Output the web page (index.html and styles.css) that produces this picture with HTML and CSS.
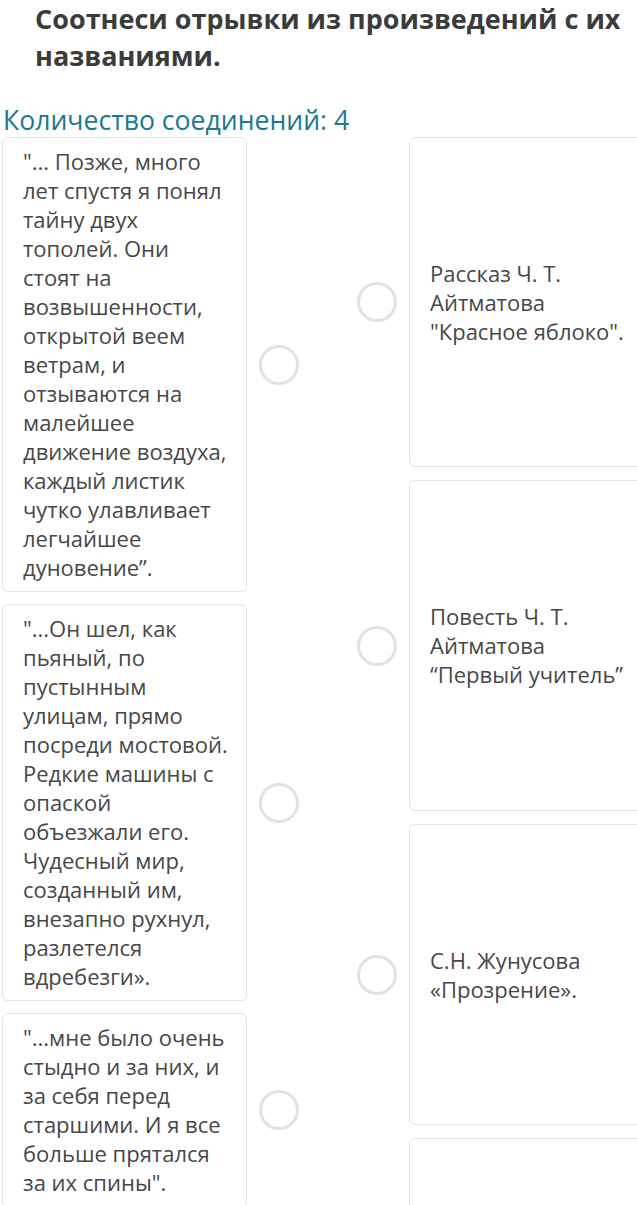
FILE: index.html
```html
<!DOCTYPE html>
<html lang="ru">
<head>
<meta charset="utf-8">
<link rel="stylesheet" href="styles.css">
</head>
<body>
<div class="page">
  <h1 class="title">Соотнеси отрывки из произведений с их названиями.</h1>
  <div class="count">Количество соединений: 4</div>
  <div class="board">
    <div class="col col-left">
      <div class="row">
        <div class="card card-left">"... Позже, много лет спустя я понял тайну двух тополей. Они стоят на возвышенности, открытой веем ветрам, и отзываются на малейшее движение воздуха, каждый листик чутко улавливает легчайшее дуновение”.</div>
        <span class="dot dot-left"></span>
      </div>
      <div class="row">
        <div class="card card-left">"...Он шел, как пьяный, по пустынным улицам, прямо посреди мостовой. Редкие машины с опаской объезжали его. Чудесный мир, созданный им, внезапно рухнул, разлетелся вдребезги».</div>
        <span class="dot dot-left"></span>
      </div>
      <div class="row">
        <div class="card card-left">"...мне было очень стыдно и за них, и за себя перед старшими. И я все больше прятался за их спины".</div>
        <span class="dot dot-left"></span>
      </div>
    </div>
    <div class="col col-right">
      <div class="row">
        <span class="dot dot-right"></span>
        <div class="card card-right h-a">Рассказ Ч. Т. Айтматова "Красное яблоко".</div>
      </div>
      <div class="row">
        <span class="dot dot-right"></span>
        <div class="card card-right h-b">Повесть Ч. Т. Айтматова “Первый учитель”</div>
      </div>
      <div class="row">
        <span class="dot dot-right"></span>
        <div class="card card-right h-c">С.Н. Жунусова «Прозрение».</div>
      </div>
      <div class="row">
        <span class="dot dot-right"></span>
        <div class="card card-right h-d"></div>
      </div>
    </div>
  </div>
</div>
</body>
</html>
```

FILE: styles.css
```css
html, body {
  margin: 0;
  padding: 0;
  background: #ffffff;
}
body {
  font-family: "Open Sans", "Noto Sans", sans-serif;
  overflow: hidden;
  width: 637px;
  height: 1205px;
}
.page {
  width: 700px;
}
.title {
  margin: 0;
  padding: 0 0 0 35px;
  width: 600px;
  font-size: 27px;
  line-height: 37px;
  font-weight: 700;
  color: #3b3b3b;
}
.count {
  margin: 31px 0 0 3px;
  font-size: 26.6px;
  line-height: 30px;
  color: #1b7890;
}
.board {
  display: flex;
  margin-top: 2px;
  padding-left: 2px;
}
.col {
  display: flex;
  flex-direction: column;
}
.col-left {
  gap: 12px;
}
.col-right {
  gap: 13px;
  margin-left: 58px;
}
.row {
  display: flex;
  align-items: center;
}
.card {
  box-sizing: border-box;
  border: 1px solid #e3e3e3;
  border-radius: 6px;
  background: #fff;
  font-size: 22px;
  line-height: 29px;
  color: #474747;
}
.card-left {
  width: 245px;
  padding: 9px 18px 9px 20px;
}
.card-right {
  width: 245px;
  padding: 0 22px 0 20px;
  display: flex;
  align-items: center;
}
.h-a { height: 330px; }
.h-b { height: 331px; }
.h-c { height: 301px; }
.h-d { height: 300px; }
.dot {
  box-sizing: border-box;
  flex: none;
  width: 40px;
  height: 40px;
  border: 3px solid #e2e2e2;
  border-radius: 50%;
}
.dot-left { margin-left: 12px; }
.dot-right { margin-right: 12px; }
```
